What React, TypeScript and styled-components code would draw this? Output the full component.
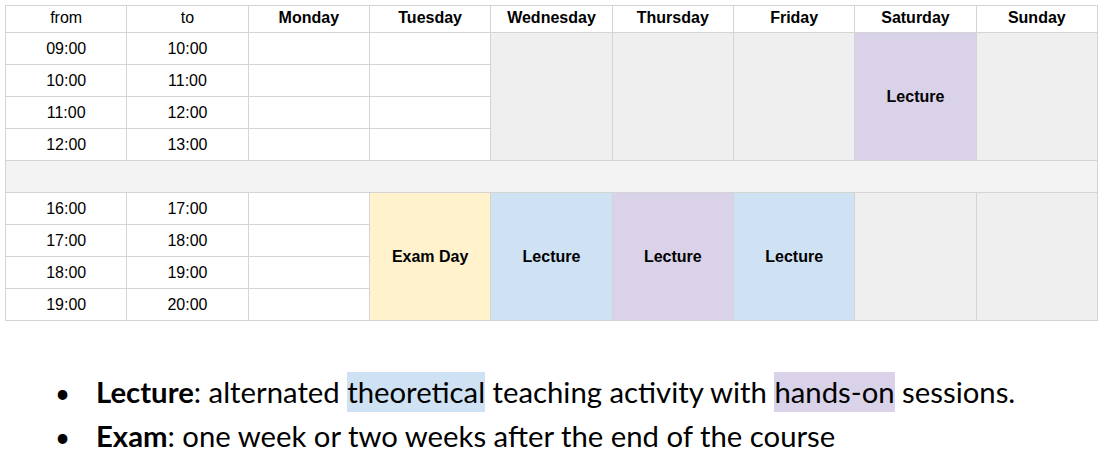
import React, { FC } from 'react'
import styled, { createGlobalStyle, css } from 'styled-components'

const COLORS = {
  BORDER: '#d4d4d4',
  GRAY: '#efefef',
  BREAK: '#f3f3f3',
  YELLOW: '#fff2cc',
  BLUE: '#cfe2f3',
  PURPLE: '#d9d2e9',
  TEXT: '#000000',
}

type Tone = 'white' | 'gray' | 'yellow' | 'blue' | 'purple'

const TONE_BG: Record<Tone, string> = {
  white: '#ffffff',
  gray: COLORS.GRAY,
  yellow: COLORS.YELLOW,
  blue: COLORS.BLUE,
  purple: COLORS.PURPLE,
}

const DAYS = ['Monday', 'Tuesday', 'Wednesday', 'Thursday', 'Friday', 'Saturday', 'Sunday']
const MORNING = [
  ['09:00', '10:00'],
  ['10:00', '11:00'],
  ['11:00', '12:00'],
  ['12:00', '13:00'],
]
const AFTERNOON = [
  ['16:00', '17:00'],
  ['17:00', '18:00'],
  ['18:00', '19:00'],
  ['19:00', '20:00'],
]

// blocks spanning the whole half-day, in day order from Wednesday (morning) / Tuesday (afternoon) on
const MORNING_BLOCKS: { tone: Tone; label?: string }[] = [
  { tone: 'gray' },
  { tone: 'gray' },
  { tone: 'gray' },
  { tone: 'purple', label: 'Lecture' },
  { tone: 'gray' },
]
const AFTERNOON_BLOCKS: { tone: Tone; label?: string }[] = [
  { tone: 'yellow', label: 'Exam Day' },
  { tone: 'blue', label: 'Lecture' },
  { tone: 'purple', label: 'Lecture' },
  { tone: 'blue', label: 'Lecture' },
  { tone: 'gray' },
  { tone: 'gray' },
]

const App: FC = () => {
  return (
    <>
      <GlobalStyle />
      <StyledPage>
        <StyledTable>
          <colgroup>
            {Array.from({ length: 9 }).map((_, i) => (
              <col key={i} />
            ))}
          </colgroup>
          <thead>
            <StyledHeadRow>
              <StyledHeadCell>from</StyledHeadCell>
              <StyledHeadCell>to</StyledHeadCell>
              {DAYS.map((d) => (
                <StyledHeadCell key={d} bold>
                  {d}
                </StyledHeadCell>
              ))}
            </StyledHeadRow>
          </thead>
          <tbody>
            {MORNING.map(([from, to], i) => (
              <StyledRow key={from}>
                <StyledCell>{from}</StyledCell>
                <StyledCell>{to}</StyledCell>
                <StyledCell />
                <StyledCell />
                {i === 0 &&
                  MORNING_BLOCKS.map((b, j) => (
                    <StyledCell key={j} rowSpan={4} tone={b.tone} bold>
                      {b.label}
                    </StyledCell>
                  ))}
              </StyledRow>
            ))}
            <StyledRow>
              <StyledBreakCell colSpan={9} />
            </StyledRow>
            {AFTERNOON.map(([from, to], i) => (
              <StyledRow key={from}>
                <StyledCell>{from}</StyledCell>
                <StyledCell>{to}</StyledCell>
                <StyledCell />
                {i === 0 &&
                  AFTERNOON_BLOCKS.map((b, j) => (
                    <StyledCell key={j} rowSpan={4} tone={b.tone} bold>
                      {b.label}
                    </StyledCell>
                  ))}
              </StyledRow>
            ))}
          </tbody>
        </StyledTable>

        <StyledNotes>
          <StyledNote>
            <StyledBullet>•</StyledBullet>
            <span>
              <strong>Lecture</strong>: alternated <StyledMark tone="blue">theoretical</StyledMark> teaching
              activity with <StyledMark tone="purple">hands-on</StyledMark> sessions.
            </span>
          </StyledNote>
          <StyledNote>
            <StyledBullet>•</StyledBullet>
            <span>
              <strong>Exam</strong>: one week or two weeks after the end of the course
            </span>
          </StyledNote>
        </StyledNotes>
      </StyledPage>
    </>
  )
}

export default App

const GlobalStyle = createGlobalStyle`
  html, body {
    margin: 0;
    padding: 0;
    background: #ffffff;
  }
`

const StyledPage = styled.div`
  width: 1102px;
  height: 454px;
  padding: 5px 0 0 5px;
  box-sizing: border-box;
  overflow: hidden;
`

const StyledTable = styled.table`
  width: 1093px;
  table-layout: fixed;
  border-collapse: collapse;
  font-family: 'Liberation Sans', Arial, sans-serif;
  font-size: 16px;
  color: ${COLORS.TEXT};
`

const StyledHeadRow = styled.tr`
  height: 27px;

  th {
    padding-bottom: 2px;
  }
`

const StyledRow = styled.tr`
  height: 32px;
`

const cellBase = css`
  border: 1px solid ${COLORS.BORDER};
  padding: 0;
  text-align: center;
  vertical-align: middle;
`

const StyledHeadCell = styled.th<{ bold?: boolean }>`
  ${cellBase};
  font-weight: ${({ bold }) => (bold ? 700 : 400)};
  background: #ffffff;
`

const StyledCell = styled.td<{ tone?: Tone; bold?: boolean }>`
  ${cellBase};
  padding-top: 1px;
  background: ${({ tone }) => TONE_BG[tone ?? 'white']};
  font-weight: ${({ bold }) => (bold ? 700 : 400)};
`

const StyledBreakCell = styled.td`
  ${cellBase};
  background: ${COLORS.BREAK};
`

const StyledNotes = styled.ul`
  list-style: none;
  margin: 49px 0 0;
  padding: 0 0 0 50px;
  font-family: Lato, 'Open Sans', sans-serif;
  font-size: 29.3px;
  color: #000000;
`

const StyledNote = styled.li`
  display: flex;
  align-items: baseline;
  height: 44px;
  line-height: 44px;
  white-space: nowrap;

  strong {
    font-weight: 700;
  }
`

const StyledBullet = styled.span`
  width: 41px;
  flex: none;
  font-size: 26px;
`

const StyledMark = styled.span<{ tone: Tone }>`
  background: ${({ tone }) => TONE_BG[tone]};
  padding: 2px 0 3px;
  line-height: 1;
`
